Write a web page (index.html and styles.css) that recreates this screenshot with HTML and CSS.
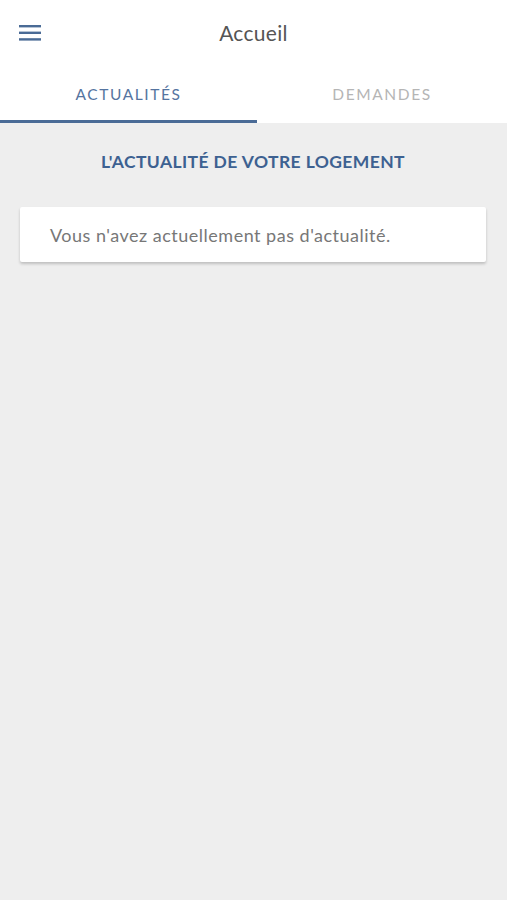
FILE: index.html
```html
<!DOCTYPE html>
<html lang="fr">
<head>
    <meta charset="UTF-8">
    <meta name="viewport" content="width=device-width, initial-scale=1.0">
    <title>Accueil</title>
    <link rel="stylesheet" href="styles.css">
</head>
<body>
    <header class="topbar">
        <button class="menu-btn" aria-label="Menu">
            <svg width="22" height="16" viewBox="0 0 22 16">
                <rect x="0" y="0" width="22" height="2.4" fill="#4a6b96"/>
                <rect x="0" y="6.6" width="22" height="2.4" fill="#4a6b96"/>
                <rect x="0" y="13.2" width="22" height="2.4" fill="#4a6b96"/>
            </svg>
        </button>
        <h1 class="topbar-title">Accueil</h1>
    </header>

    <nav class="tabs">
        <div class="tab active">ACTUALITÉS</div>
        <div class="tab">DEMANDES</div>
    </nav>

    <main class="content">
        <h2 class="section-title">L'ACTUALITÉ DE VOTRE LOGEMENT</h2>
        <div class="card">Vous n'avez actuellement pas d'actualité.</div>
    </main>
</body>
</html>
```

FILE: styles.css
```css
html, body {
    height: 100%;
}
body {
    margin: 0;
    font-family: Lato, "Open Sans", sans-serif;
    background: #eeeeee;
    display: flex;
    flex-direction: column;
}
.topbar {
    background: white;
    height: 66px;
    display: flex;
    align-items: center;
    justify-content: center;
    position: relative;
}
.menu-btn {
    position: absolute;
    left: 19px;
    top: 25px;
    padding: 0;
    border: none;
    background: none;
    line-height: 0;
}
.topbar-title {
    margin: 0 0 2px;
    font-size: 21px;
    font-weight: 400;
    color: #555555;
    letter-spacing: 0.3px;
}
.tabs {
    background: white;
    display: flex;
    height: 57px;
}
.tab {
    flex: 1;
    display: flex;
    align-items: center;
    justify-content: center;
    padding-top: 2px;
    font-size: 15.5px;
    letter-spacing: 1.6px;
    color: #b5b5b5;
    border-bottom: 3px solid transparent;
}
.tab.active {
    flex: 0 0 257px;
    color: #5574a0;
    border-bottom-color: #4a6b96;
}
.content {
    flex: 1;
    padding: 28px 21px 28px 20px;
}
.section-title {
    margin: 0 0 35px;
    text-align: center;
    font-size: 17.5px;
    font-weight: 700;
    letter-spacing: 0.4px;
    color: #3d6191;
}
.card {
    background: white;
    height: 55px;
    display: flex;
    align-items: center;
    padding-left: 30px;
    font-size: 18px;
    letter-spacing: 0.5px;
    color: #777777;
    border-radius: 2px;
    box-shadow: 0 2px 3px rgba(0,0,0,0.2);
}
```
